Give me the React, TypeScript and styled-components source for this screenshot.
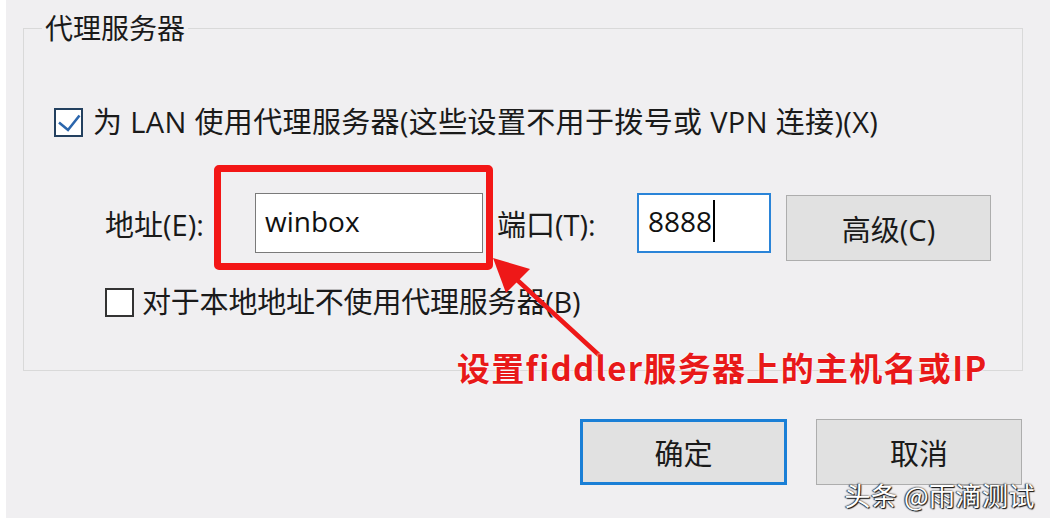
import React from "react";
import styled, { createGlobalStyle } from "styled-components";

const FONT = `"Open Sans", "Noto Sans CJK SC", sans-serif`;
const CJK = `"Noto Sans CJK SC", sans-serif`;

const GlobalStyle = createGlobalStyle`
  html, body { margin: 0; padding: 0; background: #ffffff; }
  * { box-sizing: border-box; }
`;

const Screen = styled.div`
  position: relative;
  width: 1050px;
  height: 522px;
  background: #ffffff;
  padding: 0 0 4px 6px;
  overflow: hidden;
  font-family: ${FONT};
  color: #1a1a1a;
`;

const Dialog = styled.div`
  height: 100%;
  background: #f0eff1;
  padding: 14px 27px 0 17px;
  display: flex;
  flex-direction: column;
`;

const Group = styled.fieldset`
  margin: 0;
  padding: 0;
  height: 357px;
  min-width: 0;
  border: 1px solid #d9d9d9;
  display: flex;
  flex-direction: column;
`;

const Legend = styled.legend`
  margin-left: 18px;
  padding: 0 3px;
  font-size: 28px;
  line-height: 28px;
`;

const CheckRow = styled.div<{ $indent: number; $top: number; $gap: number; $spacing: number }>`
  display: flex;
  align-items: center;
  gap: ${(p) => p.$gap}px;
  margin-top: ${(p) => p.$top}px;
  padding-left: ${(p) => p.$indent}px;
  font-size: 29px;
  line-height: 30px;
  letter-spacing: ${(p) => p.$spacing}px;
  white-space: nowrap;
`;

const Box = styled.span<{ $checked?: boolean }>`
  flex: none;
  width: 29px;
  height: 29px;
  background: #ffffff;
  border: 2px solid ${(p) => (p.$checked ? "#23405f" : "#333333")};
  display: flex;
  align-items: center;
  justify-content: center;
`;

const FieldRow = styled.div`
  display: flex;
  align-items: flex-start;
  margin-top: 56px;
  padding-left: 81px;
  font-size: 29px;
`;

const FieldLabel = styled.span<{ $w: number; $ml?: number }>`
  flex: none;
  width: ${(p) => p.$w}px;
  margin-left: ${(p) => p.$ml ?? 0}px;
  height: 60px;
  display: flex;
  align-items: center;
  white-space: nowrap;
`;

const TextBox = styled.div<{ $w: number; $focused?: boolean }>`
  flex: none;
  width: ${(p) => p.$w}px;
  height: 60px;
  background: #ffffff;
  border: ${(p) => (p.$focused ? "2px solid #2a84d8" : "1px solid #7a7a7a")};
  display: flex;
  align-items: center;
  padding-left: 9px;
  padding-bottom: 4px;
  font-size: 28px;
  color: #111;
`;

const Caret = styled.span`
  display: inline-block;
  width: 2px;
  height: 42px;
  margin-left: 1px;
  background: #000;
`;

const PushButton = styled.button<{ $w: number; $default?: boolean; $mt?: number; $ml?: number }>`
  flex: none;
  width: ${(p) => p.$w}px;
  height: 66px;
  margin-top: ${(p) => p.$mt ?? 0}px;
  margin-left: ${(p) => p.$ml ?? 0}px;
  padding: 0;
  background: #e1e1e1;
  border: ${(p) => (p.$default ? "3px solid #1a7fd6" : "1px solid #adadad")};
  font-family: ${FONT};
  font-size: 29px;
  color: #1a1a1a;
`;

const Footer = styled.div`
  display: flex;
  justify-content: flex-end;
  gap: 29px;
  margin-top: 48px;
  padding-right: 1px;
`;

const RedFrame = styled.div`
  position: absolute;
  left: 214px;
  top: 165px;
  width: 279px;
  height: 105px;
  border: 7px solid #f31616;
  border-radius: 5px;
`;

const ArrowLayer = styled.svg`
  position: absolute;
  left: 0;
  top: 0;
  pointer-events: none;
`;

const Annotation = styled.div`
  position: absolute;
  left: 457px;
  top: 345px;
  font-family: ${CJK};
  font-weight: 700;
  font-size: 33px;
  line-height: 44px;
  letter-spacing: 1.3px;
  color: #e81919;
  white-space: nowrap;
  text-shadow: 0 0 2px #ffffff, 0 0 2px #ffffff;
`;

const Watermark = styled.div`
  position: absolute;
  right: 15px;
  bottom: 10px;
  font-family: ${CJK};
  font-size: 26px;
  line-height: 34px;
  letter-spacing: 0.5px;
  color: #ffffff;
  white-space: nowrap;
  text-shadow: 1px 1px 1px #111, -1px 0 1px #333, 0 0 2px #222;
`;

function CheckMark() {
  return (
    <svg width="25" height="25" viewBox="0 0 25 25">
      <polyline points="3,12.5 12,20 23.5,5.5" fill="none" stroke="#2b66ad" strokeWidth="2.6" />
    </svg>
  );
}

export default function App() {
  return (
    <>
      <GlobalStyle />
      <Screen>
        <Dialog>
          <Group>
            <Legend>代理服务器</Legend>
            <CheckRow $indent={30} $top={65} $gap={10} $spacing={0.35}>
              <Box $checked>
                <CheckMark />
              </Box>
              <span>为 LAN 使用代理服务器(这些设置不用于拨号或 VPN 连接)(X)</span>
            </CheckRow>
            <FieldRow>
              <FieldLabel $w={150}>地址(E):</FieldLabel>
              <TextBox $w={228}>winbox</TextBox>
              <FieldLabel $w={140} $ml={14}>端口(T):</FieldLabel>
              <TextBox $w={134} $focused>
                8888
                <Caret />
              </TextBox>
              <PushButton $w={205} $mt={2} $ml={15}>高级(C)</PushButton>
            </FieldRow>
            <CheckRow $indent={81} $top={26} $gap={8} $spacing={-0.2}>
              <Box />
              <span>对于本地地址不使用代理服务器(B)</span>
            </CheckRow>
          </Group>
          <Footer>
            <PushButton $w={207} $default>确定</PushButton>
            <PushButton $w={206}>取消</PushButton>
          </Footer>
        </Dialog>

        <RedFrame />
        <ArrowLayer width="1050" height="522" viewBox="0 0 1050 522">
          <line x1="600" y1="356" x2="515" y2="278" stroke="#ee1818" strokeWidth="4.5" strokeLinecap="round" />
          <polygon points="493,258 530,269 506,293" fill="#ee1818" />
        </ArrowLayer>
        <Annotation>设置fiddler服务器上的主机名或IP</Annotation>
        <Watermark>头条 @雨滴测试</Watermark>
      </Screen>
    </>
  );
}
